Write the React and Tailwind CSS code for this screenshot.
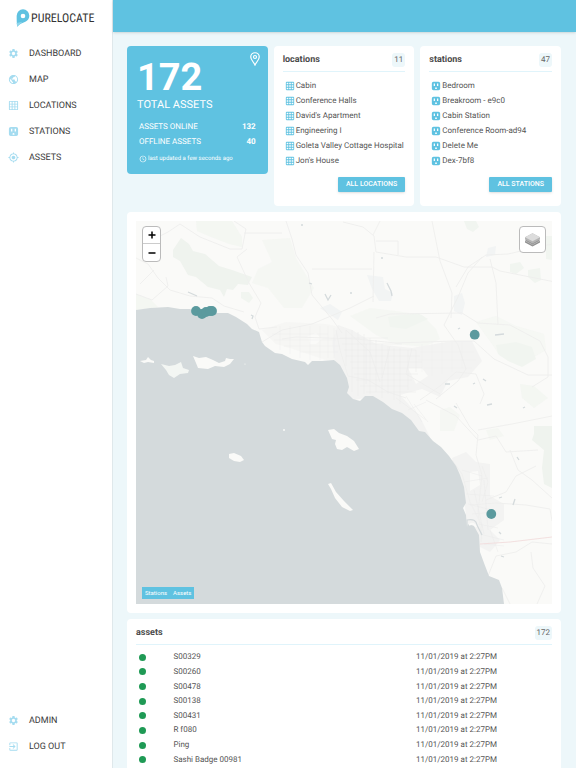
import React from "react";
import {
  MdSettings,
  MdPublic,
  MdGridOn,
  MdGpsFixed,
  MdExitToApp,
  MdAccessTime,
} from "react-icons/md";

function StationIcon({ className }) {
  return (
    <svg viewBox="0 0 24 24" className={className} fill="currentColor">
      <path
        fillRule="evenodd"
        d="M6 2h12a4 4 0 0 1 4 4v12a4 4 0 0 1-4 4H6a4 4 0 0 1-4-4V6a4 4 0 0 1 4-4zM6.500 6v6h3V6zM14.500 6v6h3V6zM10 19h4v-2a2 2 0 0 0-4 0z"
      />
    </svg>
  );
}

function PinIcon({ className }) {
  return (
    <svg
      viewBox="0 0 20 28"
      className={className}
      fill="none"
      stroke="currentColor"
      strokeWidth="2.4"
    >
      <path d="M10 26C8 21 1.5 15.500 1.500 10a8.500 8.500 0 0 1 17 0C18.500 15.500 12 21 10 26z" />
      <circle cx="10" cy="10" r="3" />
    </svg>
  );
}

function Logo() {
  return (
    <div className="flex items-center gap-px pl-4 pt-2">
      <svg viewBox="0 0 40 54" className="h-[18px] w-[14px]" fill="#5fc2e1">
        <path
          fillRule="evenodd"
          d="M20 1a19 19 0 0 1 19 19c0 9-5 15-12 18C18 42 8 44 3 53C1 44 1 30 1 20A19 19 0 0 1 20 1zM20 14a7 7 0 1 0 0 14a7 7 0 0 0 0-14z"
        />
        <path d="M1 42L18 38L3 53z" fill="#8fd6ec" />
      </svg>
      <span className="font-['Roboto_Condensed','Liberation_Sans_Narrow',Roboto,sans-serif] text-[12px] leading-5 text-[#333]">
        PURELOCATE
      </span>
    </div>
  );
}

const mainLinks = [
  { label: "DASHBOARD", Icon: MdSettings },
  { label: "MAP", Icon: MdPublic },
  { label: "LOCATIONS", Icon: MdGridOn },
  { label: "STATIONS", Icon: StationIcon },
  { label: "ASSETS", Icon: MdGpsFixed },
];

const bottomLinks = [
  { label: "ADMIN", Icon: MdSettings },
  { label: "LOG OUT", Icon: MdExitToApp },
];

const locations = [
  "Cabin",
  "Conference Halls",
  "David's Apartment",
  "Engineering I",
  "Goleta Valley Cottage Hospital",
  "Jon's House",
];

const stations = [
  "Bedroom",
  "Breakroom - e9c0",
  "Cabin Station",
  "Conference Room-ad94",
  "Delete Me",
  "Dex-7bf8",
];

const assets = [
  "S00329",
  "S00260",
  "S00478",
  "S00138",
  "S00431",
  "R f080",
  "Ping",
  "Sashi Badge 00981",
];

function NavList({ links }) {
  return (
    <ul>
      {links.map(({ label, Icon }) => (
        <li key={label}>
          <a
            href="#"
            className="flex h-[26px] items-center gap-[10px] pl-2 text-[9px] leading-3 text-[#3a3a3a]"
          >
            <Icon className="mb-0.5 h-[11px] w-[11px] text-[#a5dcf0]" />
            {label}
          </a>
        </li>
      ))}
    </ul>
  );
}

function CardHeader({ title, count }) {
  return (
    <div className="flex h-[17px] items-start justify-between border-b border-[#e0f4fb]">
      <h2 className="text-[9px] leading-[10px] font-bold text-[#4a4a4a]">
        {title}
      </h2>
      <span className="-mt-0.5 rounded-[3px] bg-[#edf7fa] px-[2px] text-[8px] leading-[14px] text-[#666]">
        {count}
      </span>
    </div>
  );
}

function ListCard({ title, count, items, Icon, button }) {
  return (
    <section className="flex h-40 flex-col rounded-sm bg-white px-[9px] pt-[9px] pb-[14px]">
      <CardHeader title={title} count={count} />
      <ul className="mt-[6px] pl-[2px]">
        {items.map((item) => (
          <li
            key={item}
            className="flex h-[15px] items-center gap-px text-[8px] leading-3 whitespace-nowrap text-[#555]"
          >
            <Icon className="h-[10px] w-[10px] shrink-0 text-[#5fc2e1]" />
            {item}
          </li>
        ))}
      </ul>
      <button className="mt-auto h-[15px] self-end rounded-[1px] bg-[#5fc2e1] px-2 text-[7px] leading-[15px] font-medium whitespace-nowrap text-white shadow-sm">
        {button}
      </button>
    </section>
  );
}

function TotalCard() {
  return (
    <section className="relative h-32 rounded-sm bg-[#5fc2e1] px-[10px] pt-[10px] text-white">
      <PinIcon className="absolute top-[6px] right-2 h-[14px] w-[10px]" />
      <p className="text-[38px] leading-[44px] font-bold">172</p>
      <p className="text-[11px] leading-[10px]">TOTAL ASSETS</p>
      <dl className="mt-[9px] px-[2px] text-[8px] leading-[15px]">
        <div className="flex justify-between">
          <dt>ASSETS ONLINE</dt>
          <dd className="font-bold">132</dd>
        </div>
        <div className="flex justify-between">
          <dt>OFFLINE ASSETS</dt>
          <dd className="font-bold">40</dd>
        </div>
      </dl>
      <p className="mt-1 flex items-center gap-px px-[2px] text-[6px] leading-3">
        <MdAccessTime className="h-2 w-2" />
        last updated a few seconds ago
      </p>
    </section>
  );
}

const pins = [
  [196, 311],
  [202, 314],
  [206, 312],
  [212, 311],
  [210, 311],
  [474.7, 334.700],
  [491.300, 514],
];

function CoastMap() {
  return (
    <svg viewBox="136 221 416 383" className="block w-full">
      <rect x="136" y="221" width="416" height="383" fill="#fafaf8" />

      {/* forests and parks */}
      <g fill="#f1f5f0">
        <path d="M173 250l8-12l8 6l4 7l12 3l14 12l13 4l20 7l-4 8l-10-1l-5 6l-6-1l-3 8l-4-7l-12-3l-12-10l-8-2l-8-14l-7-4z" fill="#eff3ee" />
        <path d="M196 221h36l10 16l0 10l-13-3l-18-7l-14-6z" opacity=".7" />
        <path d="M262 240l28-2l6 20l18 30l-12 20h-18l-16-20l-16-5l6-14l14-7z" opacity=".6" />
        <path d="M241 292l8 0l4 6l-4 5l-8-5z" />
        <path d="M350 316l20-8l26 3l26 4l14 14l4 10l-16 8l-28-3l-20-9z" opacity=".6" />
        <path d="M388 317l30-4l10 6l-22 10l-16-2z" />
        <path d="M476 322l20-6l20 10l28 8l2 16l-24 14l-22-8l-8-12z" opacity=".5" />
        <path d="M496 345l20-3l16 5l4 12l-14 8l-14-6l-10-7z" />
        <path d="M464 221h12l3 6l-6 5l-6-3z" />
        <path d="M510 264l10-2l4 6l-8 6l-6-2zM528 270l12-2l1 12l-6 3l-7-6zM546 236h6v24l-6-1z" />
        <path d="M534 426h18v62l-8-4l-2-16l2-18l-12-10l2-6z" fill="#eff3ee" />
        <path d="M520 384l14 2l14 12l-14 10l-12-10zM136 294l14 5l8 8l-22 3z" opacity=".7" />
        <path d="M440 410l10-3l10 8l-6 16h-14zM486 430l12-2l6 8l-14 4z" opacity=".6" />
      </g>

      {/* built-up areas */}
      <g fill="#f3f3f2">
        <path d="M338 325l14 5l24 14l36 4l40-7l20 0l10 20l-14 16l-20 4l-8 16l-18-8l-22 6l20 22l10 20l-14 5l-10-16l-20-12l-22-16l-14 3l-4-10l-10-24l-4-24z" />
        <path d="M262 330l24-8l40 2l18 4v32h-18l-30-10l-20-6z" opacity=".6" />
        <path d="M452 458l14-6l10 10l14 2l0 32l14 8v16l-14 10l10 10l-10 12l-12-6l-10-14l-4-34z" />
        <path d="M367 275l16 2l2 12l8 4l-2 8h-12l-7-12z" fill="#f2f4f4" />
        <path d="M454 296l8-3l3 10l-3 12l-8-4zM488 248l8-2l-1 9l-9 2zM320 308l10-4l12 8l-4 8z" fill="#f2f4f4" />
        <path d="M308 336l8-3l6 6l-6 5h-6zM408 368l14 0l6 8l-12 8zM470 472l8-1l2 14l-10 6z" fill="#fafaf8" />
      </g>

      {/* freeways */}
      <g fill="none" stroke="#eeeeed" strokeWidth=".9">
        <path d="M136 258l12 6l10 14l12 12l20 6l22 2l12 8l20 6" />
        <path d="M136 294l16 6l16-14l-2-9M140 284l14-14" />
        <path d="M152 240l16-8l12-8l20 13l30 12h12l4-20l-12-8" />
        <path d="M247 249l-10 8l12 26l12 20l-6 14l4 12l18-2" />
        <path d="M244 233h38M286 221l6 18l4 16l12 18l4 22l20 24l10 14" />
        <path d="M312 269h60M374 252l-1 50M343 222l20 5l11 9l2 16l30 5h30l28 10h28l8 4l60 12" />
        <path d="M380 221l-7 14M376 241h22v14M432 221l8 40l12 32l-1 25" />
        <path d="M482 257l-14 16l-10 24l-14 28l14 20l8 24l-8 12l-22 18" />
        <path d="M552 244l-44 10l-22 1l-18 12l-12 20M490 259l6 24l2 42M376 318l14-4l72-1l16 10l32 2l30 16l8 16v20l-16 10" />
        <path d="M282 339l14-2l60 2l40 4l58-2h20l20 18l34 16h40" />
        <path d="M262 342l20-12l30-6l38-16l24-12" />
        <path d="M336 330l4 20l8 26l20 4l20 12l18 6M346 330l24 22l10 30M366 344l0 40M390 346l-8 32M412 348l-6 26l34 20" />
        <path d="M420 400l20-14l16-14l20 2l8 20l-4 10M456 403l14 24l8 8l-2 20l6 20l-4 38l4 26" />
        <path d="M426 400l30 16l22 24l18-4l10 16l32-2M478 430l34-6l40-8" />
        <path d="M452 460l10 14l8 28l12 24l-1 16M470 505l26-2l30 2l24 4l2 12M486 500l20-8l10-16l20-10" />
        <path d="M488 576l8-20l20-4l16-10l20 2M531 552l2 16l12 18l-8 18M502 588l8 16" />
        <path d="M510 450l8 20l14 10l20 18M482 466l6 16l-6 20" />
      </g>

      {/* street grid around the city */}
      <g fill="none" stroke="#ebebea" strokeWidth=".5">
        <path d="M340 338h48M342 344h60M344 350h72M346 356h74M350 362h72M352 368h70M354 374h64M356 380h56M360 386h48M366 392h50" />
        <path d="M346 330v36M352 330v62M358 332v64M364 334v60M370 338v56M376 340v52M382 344v54M388 346v48M394 348v52M400 348v56M408 350v40M416 350v22" />
        <path d="M272 334h56M274 340h62M284 346h56M300 352h38M280 326v24M290 326v28M300 326v32M310 326v34M320 326v34M328 326v32M334 328v30" opacity=".6" />
        <path d="M422 344v28M432 342v34M442 342v32M452 342v30M462 342v26M420 352h54M418 360h58M424 368h48" opacity=".7" />
        <path d="M462 470l20 6M464 482l24-4M466 494l28 2M468 504l24 6M472 514l22-2M478 524l20 4M480 534l24 6M484 544l20 2M474 490l10 44M484 480l4 50M490 530l8 22" />
        <path d="M396 398l30 22M406 396l16 26M414 404l14 18M408 410l18-8" />
      </g>
      <path d="M480 544l30-2l42-5" fill="none" stroke="#f2dddd" strokeWidth=".9" />

      {/* ocean */}
      <path
        fill="#d4dadc"
        d="M136 310L150 308L168 307L180 309L190 309L197 313L207 316L215 313L228 313L236 317L247 324L252 329L259 332L262 342L265 346L275 353L282 354L292 359L305 362L308 365L312 361L322 361L334 360L340 365L347 378L349 387L347 393L353 399L360 401L365 396L373 396L383 402L392 409L402 413L411 420L419 431L425 432L433 441L441 447L449 456L456 466L460 475L464 487L466 503L463 508L466 515L467 527L468 524L474 526L479 535L480 552L484 563L489 576L499 580L502 588L504 604H136z"
      />
      <path
        d="M467 529V520q9-2 10 5l5 10"
        fill="none"
        stroke="#d4dadc"
        strokeWidth="1.200"
      />
      <path
        d="M469 525q5-3 7 2"
        fill="none"
        stroke="#fafaf8"
        strokeWidth="2"
      />

      {/* channel islands */}
      <g fill="#fafaf8">
        <path d="M140 361l6-1l2-3l3 3l3 1l0 2l-6-1l-4 1z" />
        <path d="M161 364l8 2l6-1l6-3l2 6l6 2l-1 3l-8 1l-6 4l-5-3l-3-5z" fill="#f3f6f3" />
        <path d="M193 356l6 2l7-1l7 3l6 3l6-2l1-3l4 1l4 0l-4 5l-6 3l-9-1l-7 3l-10-1l-2-5z" />
        <path d="M229 454l5-1l7 3l3 4l-4 2l-6-1l-5-3z" />
        <path d="M328 430l6-1l5 4l8 3l7 5l5 8l-5 2l-7-4l-5 3l-5-1l-2-5l1-4l-4-1z" />
        <path d="M328 484l3-1l5 9l8 9l9 9l-3 1l-8-4l-7-9l-4-9z" />
        <circle cx="284" cy="430" r="1" />
        <circle cx="245" cy="364" r=".6" />
      </g>

      {/* lakes */}
      <g fill="none" stroke="#d4dadc" strokeWidth="1.300">
        <path d="M188 292l9 4M325 294l3 6l3-5M251 315l2 1l-1 3M309 283l3 1M387 283l4 8l1 5M495 335l9-1M445 384h5M473 384l2-1M483 379l3 2M487 405l5-1M454 406l3 2M517 457l2 3M499 498l3-1M513 505l2-6M499 532l2 2M501 556l3 1M458 329l2-1M350 293l2 0M381 258h2M301 225h2M523 408l2-1" />
      </g>

      <g fill="#5b9a9e">
        {pins.map(([x, y], i) => (
          <circle key={i} cx={x} cy={y} r="4.900" />
        ))}
      </g>
    </svg>
  );
}

function MapCard() {
  return (
    <section className="rounded-sm bg-white p-[9px]">
      <div className="relative">
        <CoastMap />
        <div className="absolute top-[5px] left-[6px] flex flex-col rounded-sm border border-[#bbb] bg-white text-black">
          <button
            aria-label="Zoom in"
            className="flex h-[17px] w-[17px] items-center justify-center border-b border-[#ccc]"
          >
            <svg viewBox="0 0 8 8" className="h-2 w-2" stroke="currentColor" strokeWidth="1.500">
              <path d="M.5 4h7M4 .5v7" />
            </svg>
          </button>
          <button
            aria-label="Zoom out"
            className="flex h-[17px] w-[17px] items-center justify-center"
          >
            <svg viewBox="0 0 8 8" className="h-2 w-2" stroke="currentColor" strokeWidth="1.500">
              <path d="M.5 4h7" />
            </svg>
          </button>
        </div>
        <button
          aria-label="Layers"
          className="absolute top-[5px] right-[6px] flex h-[27px] w-[27px] items-center justify-center rounded-sm border border-[#bbb] bg-white"
        >
          <svg viewBox="0 0 26 26" className="h-[15px] w-[15px]">
            <path d="M0 15l13-7l13 7v3l-13 7l-13-7z" fill="#8f8f8f" />
            <path d="M0 15l13 7l13-7" fill="none" stroke="#d0d0d0" strokeWidth="1" />
            <path d="M0 9l13-7l13 7v4l-13 7l-13-7z" fill="#b5b5b5" />
            <path d="M0 9l13-7l13 7l-13 7z" fill="#dcdcdc" />
          </svg>
        </button>
        <div className="absolute bottom-[5px] left-[6px] flex bg-[#5fc2e1] text-[6px] leading-3 text-white">
          <button className="px-[3px]">Stations</button>
          <button className="px-[3px]">Assets</button>
        </div>
      </div>
    </section>
  );
}

function AssetsCard() {
  return (
    <section className="rounded-sm bg-white px-[9px] pt-[9px] pb-3">
      <CardHeader title="assets" count={172} />
      <table className="mt-[5px] h-[117px] w-full text-left text-[8px] leading-3 text-[#555]">
        <tbody>
          {assets.map((name) => (
            <tr key={name}>
              <td className="w-[9%] pl-[3px]">
                <span className="block h-[7px] w-[7px] rounded-full bg-[#1f9a55]" />
              </td>
              <td>{name}</td>
              <td className="w-[136px]">11/01/2019 at 2:27PM</td>
            </tr>
          ))}
        </tbody>
      </table>
    </section>
  );
}

function App() {
  return (
    <div className="flex h-screen overflow-hidden bg-[#edf7fa] font-[Roboto,sans-serif] antialiased [text-rendering:geometricPrecision]">
      <nav className="flex w-[113px] shrink-0 flex-col border-r border-[#dfe8eb] bg-white pb-2">
        <Logo />
        <div className="mt-[13px]">
          <NavList links={mainLinks} />
        </div>
        <div className="mt-auto">
          <NavList links={bottomLinks} />
        </div>
      </nav>
      <div className="flex min-w-0 flex-1 flex-col">
        <header className="h-8 shrink-0 bg-[#5fc2e1] shadow-sm" />
        <main className="flex min-h-0 flex-1 flex-col gap-[6px] overflow-hidden pt-[14px] pr-[15px] pl-[14px] *:shrink-0">
          <div className="grid grid-cols-3 items-start gap-[6px]">
            <TotalCard />
            <ListCard
              title="locations"
              count={11}
              items={locations}
              Icon={MdGridOn}
              button="ALL LOCATIONS"
            />
            <ListCard
              title="stations"
              count={47}
              items={stations}
              Icon={StationIcon}
              button="ALL STATIONS"
            />
          </div>
          <MapCard />
          <AssetsCard />
        </main>
      </div>
    </div>
  );
}

export default App;
